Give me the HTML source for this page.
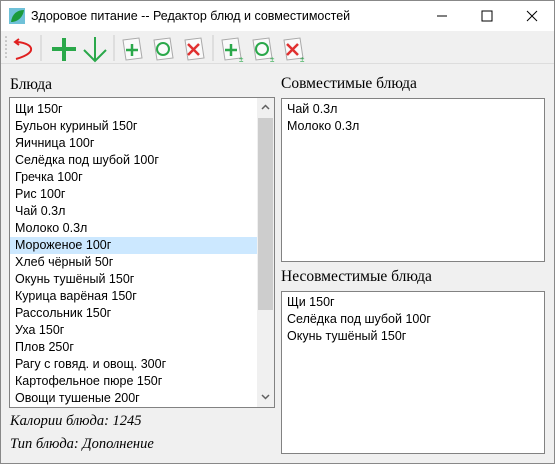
<!DOCTYPE html>
<html><head><meta charset="utf-8"><style>
*{margin:0;padding:0;box-sizing:border-box}
body{width:555px;height:464px;background:#f0f0f0;position:relative;overflow:hidden;font-family:"Liberation Sans","DejaVu Sans",sans-serif;font-size:12.5px;color:#000}
.frame{position:absolute;left:0;top:0;width:555px;height:464px;border:1px solid #888}
.title{position:absolute;left:1px;top:1px;width:553px;height:30px;background:#fff}
.title span{position:absolute;left:30px;top:8px;font-size:12.5px}
.tb{position:absolute;top:32px;left:1px;width:553px;height:32px;background:#f0f0f0;border-bottom:1px solid #ddd}
.lbl{position:absolute;font-family:"Liberation Serif",serif;font-size:15.5px}
.it{font-style:italic;font-size:14.5px}
.box{position:absolute;background:#fff;border:1px solid #828282}
.row{height:17px;line-height:17px;padding-left:5px;white-space:nowrap}
.sel{background:#cce8ff}
</style></head><body>
<div class="frame"></div>
<div class="title">
<svg style="position:absolute;left:8px;top:7px" width="16" height="16"><rect width="16" height="16" fill="#6fc1d8"/><path d="M2 14 C3 6 8 2 15 2 C14 9 9 14 2 14Z" fill="#1a9a3a"/></svg>
<span>Здоровое питание -- Редактор блюд и совместимостей</span>
<svg style="position:absolute;left:436px;top:8px" width="110" height="14"><line x1="0" y1="7" x2="10" y2="7" stroke="#000"/><rect x="45" y="2" width="10" height="10" fill="none" stroke="#000"/><path d="M90 2 L100 12 M100 2 L90 12" stroke="#000"/></svg>
</div>
<div class="tb">
<svg width="320" height="32">
<g fill="#999"><circle cx="5" cy="5" r=".8"/><circle cx="5" cy="9" r=".8"/><circle cx="5" cy="13" r=".8"/><circle cx="5" cy="17" r=".8"/><circle cx="5" cy="21" r=".8"/><circle cx="5" cy="25" r=".8"/></g>
<path d="M18 7 L14 10 L18 13 M14 10 C30 10 40 20 15 27" fill="none" stroke="#e02020" stroke-width="2"/>
<line x1="40" y1="3" x2="40" y2="29" stroke="#ccc"/>
<path d="M63 6 V29 M51 17 H75" stroke="#2aa84a" stroke-width="4"/>
<path d="M94 5 V29 M83 18 L94 29 L105 18" fill="none" stroke="#2aa84a" stroke-width="2"/>
<line x1="113" y1="3" x2="113" y2="29" stroke="#ccc"/>
<g fill="#fafafa" stroke="#aaa"><path d="M122 8 L138 6 L141 26 L125 28Z"/><path d="M153 8 L169 6 L172 26 L156 28Z"/><path d="M184 8 L200 6 L203 26 L187 28Z"/><path d="M221 8 L237 6 L240 26 L224 28Z"/><path d="M252 8 L268 6 L271 26 L255 28Z"/><path d="M283 8 L299 6 L302 26 L286 28Z"/></g>
<path d="M131 12 V24 M125 18 H137" stroke="#2aa84a" stroke-width="2.5"/>
<circle cx="162" cy="17" r="6" fill="none" stroke="#2aa84a" stroke-width="2"/>
<path d="M187 12 L198 23 M198 12 L187 23" stroke="#e03030" stroke-width="2.5"/>
<line x1="212" y1="3" x2="212" y2="29" stroke="#ccc"/>
<path d="M230 12 V24 M224 18 H236" stroke="#2aa84a" stroke-width="2.5"/>
<circle cx="261" cy="17" r="6" fill="none" stroke="#2aa84a" stroke-width="2"/>
<path d="M286 12 L297 23 M297 12 L286 23" stroke="#e03030" stroke-width="2.5"/>
<g fill="#2aa84a" font-size="8"><text x="238" y="30">±</text><text x="269" y="30">±</text><text x="299" y="30">±</text></g>
</svg>
</div>
<div class="lbl" style="left:10px;top:76px">Блюда</div>
<div class="box" style="left:9px;top:97px;width:266px;height:311px">
<div style="padding-top:3px">
<div class="row">Щи 150г</div><div class="row">Бульон куриный 150г</div><div class="row">Яичница 100г</div><div class="row">Селёдка под шубой 100г</div><div class="row">Гречка 100г</div><div class="row">Рис 100г</div><div class="row">Чай 0.3л</div><div class="row">Молоко 0.3л</div><div class="row sel" style="width:247px">Мороженое 100г</div><div class="row">Хлеб чёрный 50г</div><div class="row">Окунь тушёный 150г</div><div class="row">Курица варёная 150г</div><div class="row">Рассольник 150г</div><div class="row">Уха 150г</div><div class="row">Плов 250г</div><div class="row">Рагу с говяд. и овощ. 300г</div><div class="row">Картофельное пюре 150г</div><div class="row">Овощи тушеные 200г</div>
</div>
<div style="position:absolute;right:0;top:0;width:17px;height:309px;background:#f0f0f0">
<svg width="17" height="309" style="position:absolute;left:0;top:0"><path d="M5 11 L8.5 7.5 L12 11" fill="none" stroke="#606060" stroke-width="1.5"/><path d="M5 297 L8.5 300.5 L12 297" fill="none" stroke="#606060" stroke-width="1.5"/><rect x="1" y="20" width="15" height="192" fill="#cdcdcd"/></svg>
</div>
</div>
<div class="lbl it" style="left:10px;top:413px">Калории блюда: 1245</div>
<div class="lbl it" style="left:10px;top:436px">Тип блюда: Дополнение</div>
<div class="lbl" style="left:281px;top:75px">Совместимые блюда</div>
<div class="box" style="left:281px;top:98px;width:264px;height:164px;padding-top:2px">
<div class="row">Чай 0.3л</div><div class="row">Молоко 0.3л</div></div>
<div class="lbl" style="left:281px;top:268px">Несовместимые блюда</div>
<div class="box" style="left:281px;top:291px;width:264px;height:163px;padding-top:2px">
<div class="row">Щи 150г</div><div class="row">Селёдка под шубой 100г</div><div class="row">Окунь тушёный 150г</div></div>
</body></html>
